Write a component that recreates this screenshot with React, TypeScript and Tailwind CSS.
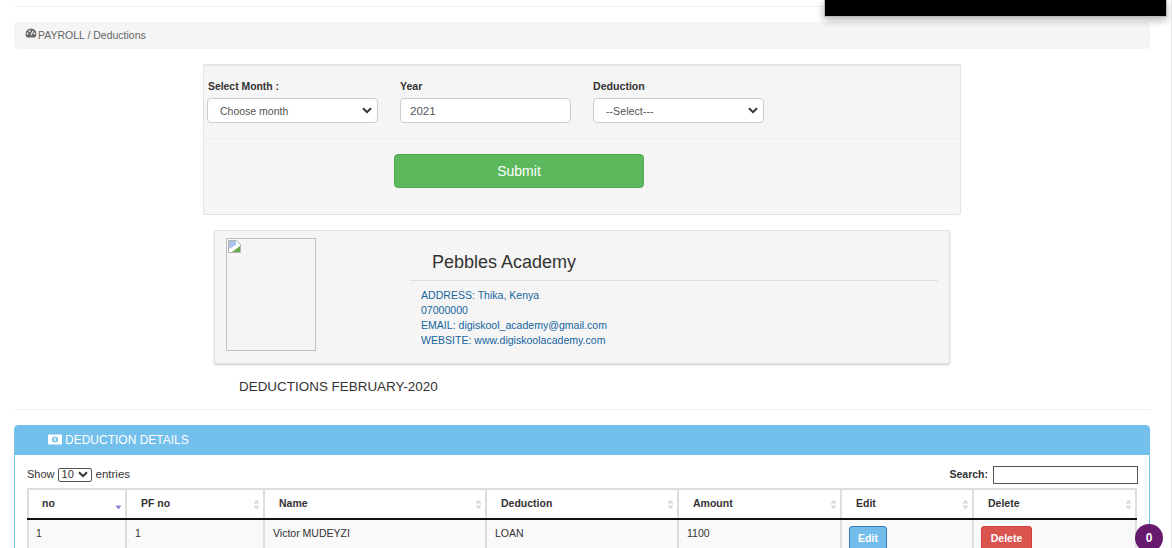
import React from "react";

const font = { fontFamily: '"Liberation Sans", Arial, sans-serif' };

function Chevron() {
  return (
    <svg width="10" height="7" viewBox="0 0 10 7" className="shrink-0">
      <path d="M1 1.2 L5 5.2 L9 1.2" fill="none" stroke="#333" strokeWidth="2" />
    </svg>
  );
}

function SelectBox({ text, size, textPad }: { text: string; size: string; textPad: string }) {
  return (
    <div className={`h-[25px] w-[171px] bg-white border border-[#ccc] rounded-[4px] flex items-center justify-between pl-[12px] pr-[5px] text-[#555] ${size}`}>
      <span className={textPad}>{text}</span>
      <Chevron />
    </div>
  );
}

function SortIcon({ active }: { active?: boolean }) {
  return (
    <svg width="7" height="11" viewBox="0 0 7 11" className="absolute right-[3px] top-[9px]">
      {!active && <path d="M3.5 0.5 L6.5 4.5 H0.5 Z" fill="#d8d8d8" />}
      <path d="M0.5 6.5 H6.5 L3.5 10.5 Z" fill={active ? "#8a86d8" : "#d8d8d8"} />
    </svg>
  );
}

const cols = [
  { label: "no", w: "w-[100px]", pl: "pl-[13px]", cellPl: "pl-[7px]", active: true },
  { label: "PF no", w: "w-[138px]", pl: "pl-[14px]", cellPl: "pl-[8px]" },
  { label: "Name", w: "w-[222px]", pl: "pl-[14px]", cellPl: "pl-[8px]" },
  { label: "Deduction", w: "w-[192px]", pl: "pl-[14px]", cellPl: "pl-[8px]" },
  { label: "Amount", w: "w-[163px]", pl: "pl-[14px]", cellPl: "pl-[8px]" },
  { label: "Edit", w: "w-[132px]", pl: "pl-[14px]", cellPl: "pl-[7px]" },
  { label: "Delete", w: "w-[163px]", pl: "pl-[14px]", cellPl: "pl-[7px]" },
];

const cells = ["1", "1", "Victor MUDEYZI", "LOAN", "1100"];

export default function App() {
  return (
    <div style={font} className="relative h-[548px] w-[1172px] overflow-hidden bg-white text-[#333] text-[12px]">
      {/* overlay black box */}
      <div className="absolute left-[824px] top-0 h-[17px] w-[343px] bg-black border-b border-x border-[#bbb] shadow-[0_3px_9px_rgba(0,0,0,0.3)]" />
      {/* window edge */}
      <div className="absolute right-0 top-0 h-full w-px bg-[#e4e4e4]" />

      <div className="w-[1136px] ml-[14px]">
        <div className="h-[7px] border-b border-[#eee]" />
        <div className="mt-[15px] h-[27px] bg-[#f5f5f5] rounded-[4px] flex items-center pl-[11px] text-[#666] text-[10.5px]">
          <svg width="12" height="11" viewBox="0 0 12 11" className="mb-[4px] mr-[1px]">
            <path d="M6 0.5 A5.5 5.5 0 0 0 0.5 6 A5.5 5.5 0 0 0 1.8 9.5 H10.2 A5.5 5.5 0 0 0 11.5 6 A5.5 5.5 0 0 0 6 0.5 Z" fill="#666" />
            <path d="M6 7 L8 3" stroke="#f5f5f5" strokeWidth="1.2" />
            <circle cx="2.5" cy="5.5" r="0.9" fill="#f5f5f5" />
            <circle cx="4.5" cy="3" r="0.9" fill="#f5f5f5" />
            <circle cx="9.5" cy="5.5" r="0.9" fill="#f5f5f5" />
          </svg>
          <span>PAYROLL / Deductions</span>
        </div>

        {/* filter form */}
        <div className="mt-[15px] ml-[189px] w-[758px] h-[151px] bg-[#f5f5f5] border border-[#e3e3e3] rounded-[2px] shadow-[inset_0_1px_1px_rgba(0,0,0,0.05)]">
          <div className="h-[74px] pt-[14px] pl-[3px] flex gap-[22px] border-b border-[#eeeeee]">
            <div>
              <div className="pl-px font-bold text-[10.4px] h-[19px] leading-[15px] text-[#333]">Select Month :</div>
              <SelectBox text="Choose month" size="text-[10.5px]" textPad="pt-[3px]" />
            </div>
            <div>
              <div className="font-bold text-[10.6px] h-[19px] leading-[14px]">Year</div>
              <div className="h-[25px] w-[171px] bg-white border border-[#ccc] rounded-[4px] flex items-center pl-[9px] pt-[3px] text-[11.5px] text-[#555]">2021</div>
            </div>
            <div>
              <div className="font-bold text-[10.6px] h-[19px] leading-[14px]">Deduction</div>
              <SelectBox text="--Select---" size="text-[10.7px]" textPad="pt-px" />
            </div>
          </div>
          <div className="mt-[15px] ml-[190px] w-[250px] h-[34px] bg-[#5cb85c] border border-[#4cae4c] rounded-[4px] flex items-center justify-center text-white text-[14px]">
            Submit
          </div>
        </div>

        {/* school card */}
        <div className="mt-[15px] ml-[200px] w-[736px] h-[134px] bg-[#f5f5f5] border border-[#e3e3e3] rounded-[2px] shadow-[0_1px_2px_rgba(0,0,0,0.2)] flex">
          <div className="ml-[11px] mt-[7px] w-[90px] h-[113px] border border-[#c0c0c0] shrink-0 p-px">
            <svg width="13" height="13" viewBox="0 0 13 13">
              <path d="M0.5 0.5 H8.5 L12.5 4.5 V12.5 H0.5 Z" fill="#fff" stroke="#b5b5b5" strokeWidth="1" />
              <path d="M1 1 H8 V5 L1 9 Z" fill="#a9c3ea" />
              <path d="M4 12 L12 6 V12 Z" fill="#6aa84f" />
            </svg>
          </div>
          <div className="ml-[94px] w-[528px]">
            <div className="h-[50px] pl-[22px] pt-[20px] text-[18px] leading-[22px] text-[#333] border-b border-[#ddd]">Pebbles Academy</div>
            <div className="pl-[11px] pt-[7px] text-[10.55px] leading-[15px] text-[#15659f]">
              <div>ADDRESS: Thika, Kenya</div>
              <div>07000000</div>
              <div>EMAIL: digiskool_academy@gmail.com</div>
              <div>WEBSITE: www.digiskoolacademy.com</div>
            </div>
          </div>
        </div>

        <div className="mt-[15px] ml-[225px] h-[16px] text-[13.45px] leading-[16px] text-[#333]">DEDUCTIONS FEBRUARY-2020</div>
        <div className="mt-[14px] border-b border-[#eee]" />

        {/* details panel */}
        <div className="mt-[15px] border border-[#74c0ec] rounded-t-[4px] h-[200px]">
          <div className="h-[29px] bg-[#74c0ec] flex items-center pb-[2px] pl-[33px] text-white text-[12px]">
            <svg width="14" height="11" viewBox="0 0 14 11" className="mr-[3px]">
              <rect x="0" y="0.5" width="14" height="10" rx="1" fill="#fff" />
              <circle cx="7" cy="5.5" r="3" fill="#74c0ec" />
              <rect x="6.3" y="3.7" width="1.4" height="3.6" fill="#fff" />
            </svg>
            <span>DEDUCTION DETAILS</span>
          </div>
          <div className="pl-[12px] pr-[11px] bg-white">
            <div className="h-[33px] pt-[6px] flex items-center justify-between text-[11px]">
              <div className="flex items-center">
                <span>Show</span>
                <div className="ml-[3px] mr-[4px] h-[14px] w-[34px] border border-[#555] rounded-[2px] flex items-center justify-between px-[3px] text-[11px]">
                  <span>10</span>
                  <Chevron />
                </div>
                <span className="text-[11.5px]">entries</span>
              </div>
              <div className="flex items-center">
                <span className="font-bold text-[10.5px] mr-[5px]">Search:</span>
                <div className="h-[18px] w-[145px] border border-[#555] bg-white" />
              </div>
            </div>
            <div className="w-[1110px]">
              <div className="flex h-[32px] border-t-2 border-[#ddd] border-b-2 border-b-[#111]">
                {cols.map((c) => (
                  <div key={c.label} className={`relative ${c.w} ${c.pl} border-r-2 first:border-l-2 border-[#ddd] flex items-center font-bold text-[10.5px]`}>
                    {c.label}
                    <SortIcon active={c.active} />
                  </div>
                ))}
              </div>
              <div className="flex h-[40px] bg-[#f9f9f9] text-[#333] text-[10.5px]">
                {cols.map((c, i) => (
                  <div key={c.label} className={`${c.w} ${c.cellPl} border-r-2 first:border-l-2 border-[#ddd] pt-[6px]`}>
                    {i < 5 && cells[i]}
                    {i === 5 && (
                      <div className="w-[38px] h-[26px] bg-[#72bde9] border border-[#2e7dbf] rounded-[3px] flex items-center justify-center text-white text-[10.5px] font-bold">Edit</div>
                    )}
                    {i === 6 && (
                      <div className="w-[51px] h-[26px] bg-[#d9534f] border border-[#d43f3a] rounded-[3px] flex items-center justify-center text-white text-[10.5px] font-bold">Delete</div>
                    )}
                  </div>
                ))}
              </div>
            </div>
          </div>
        </div>
      </div>

      {/* notification badge */}
      <div className="absolute left-[1135px] top-[524px] h-[28px] w-[28px] rounded-full bg-[#681a6e] flex items-center justify-center text-white font-bold text-[12px]">0</div>
    </div>
  );
}
